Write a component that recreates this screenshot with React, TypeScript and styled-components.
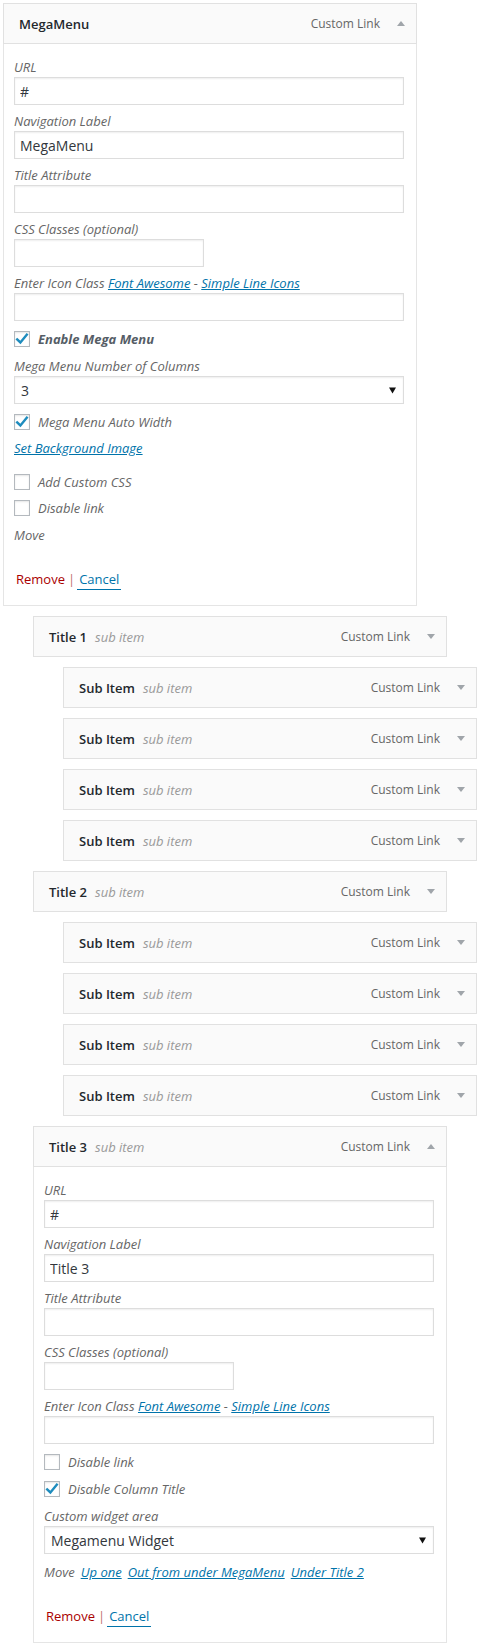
import React from "react";
import styled, { createGlobalStyle } from "styled-components";

const GlobalStyle = createGlobalStyle`
  html, body { margin: 0; padding: 0; background: #ffffff; }
  body {
    font-family: "Open Sans", "Noto Sans", sans-serif;
    font-size: 13px;
    color: #444444;
  }
  * { box-sizing: border-box; }
`;

const Page = styled.div`
  padding: 3px 0 0 3px;
  width: 481px;
  overflow: hidden;
`;

const MenuList = styled.ul`
  list-style: none;
  margin: 0;
  padding: 0;
`;

const Item = styled.li<{ $depth: number }>`
  margin: 0 0 10px ${(p) => p.$depth * 30}px;
  width: 414px;
`;

const Handle = styled.div`
  display: flex;
  align-items: center;
  justify-content: space-between;
  height: 41px;
  padding: 0 11px 0 15px;
  background: #fafafa;
  border: 1px solid #e1e1e1;
`;

const ItemTitle = styled.span`
  font-weight: 600;
  font-size: 13px;
  color: #23282d;
  white-space: nowrap;
`;

const SubTag = styled.span`
  font-weight: 400;
  font-style: italic;
  font-size: 13px;
  color: #999999;
  margin-left: 8px;
`;

const Controls = styled.span`
  display: flex;
  align-items: center;
  gap: 17px;
`;

const ItemType = styled.span`
  color: #666666;
  font-size: 12px;
`;

const Arrow = styled.svg`
  width: 8px;
  height: 5px;
  display: block;
  fill: #a0a5aa;
`;

const Panel = styled.div`
  display: flex;
  flex-direction: column;
  align-items: flex-start;
  padding: 14px 12px 16px 10px;
  background: #ffffff;
  border: 1px solid #e5e5e5;
  border-top: none;
`;

const Field = styled.div<{ $mt?: number }>`
  display: flex;
  flex-direction: column;
  margin-top: ${(p) => p.$mt ?? 0}px;
  width: 100%;
`;

const Label = styled.label`
  display: block;
  font-style: italic;
  font-size: 13px;
  line-height: 19px;
  color: #666666;
`;

const TextInput = styled.input<{ $width?: number }>`
  display: block;
  width: ${(p) => (p.$width ? `${p.$width}px` : "100%")};
  height: 28px;
  margin: 0;
  padding: 0 5px;
  border: 1px solid #dddddd;
  box-shadow: inset 0 1px 2px rgba(0, 0, 0, 0.07);
  background: #ffffff;
  font-family: "Open Sans", "Noto Sans", sans-serif;
  font-size: 14px;
  color: #32373c;
  outline: none;
  border-radius: 0;
`;

const SelectBox = styled.div`
  display: flex;
  align-items: center;
  justify-content: space-between;
  width: 100%;
  height: 28px;
  padding: 0 7px 0 6px;
  border: 1px solid #dddddd;
  box-shadow: inset 0 1px 2px rgba(0, 0, 0, 0.07);
  background: #ffffff;
  font-size: 14px;
  color: #32373c;
`;

const SelectArrow = styled.svg`
  width: 7px;
  height: 7px;
  display: block;
  fill: #111111;
`;

const CheckRow = styled.label<{ $mt: number }>`
  display: flex;
  align-items: center;
  gap: 8px;
  height: 16px;
  margin-top: ${(p) => p.$mt}px;
  font-style: italic;
  font-size: 13px;
  color: #666666;
`;

const CheckText = styled.span<{ $bold?: boolean }>`
  font-weight: ${(p) => (p.$bold ? 700 : 400)};
  color: ${(p) => (p.$bold ? "#555d66" : "#666666")};
  line-height: 16px;
`;

const Box = styled.span`
  display: flex;
  align-items: center;
  justify-content: center;
  width: 16px;
  height: 16px;
  flex: none;
  border: 1px solid #b4b9be;
  background: #ffffff;
  box-shadow: inset 0 1px 2px rgba(0, 0, 0, 0.1);
`;

const Link = styled.a`
  color: #0073aa;
  text-decoration: underline;
  font-style: italic;
  cursor: pointer;
`;

const BlockLink = styled(Link)<{ $mt: number }>`
  display: block;
  font-size: 13px;
  line-height: 19px;
  margin-top: ${(p) => p.$mt}px;
`;

const MoveRow = styled.div<{ $mt: number }>`
  display: flex;
  align-items: center;
  gap: 6px;
  line-height: 19px;
  margin-top: ${(p) => p.$mt}px;
  font-style: italic;
  font-size: 13px;
  color: #666666;
`;

const Actions = styled.div`
  display: block;
  line-height: 19px;
  margin-top: 25px;
  padding-left: 2px;
  white-space: nowrap;
`;

const RemoveLink = styled.a`
  color: #aa0000;
  text-decoration: none;
`;

const Sep = styled.span`
  color: #c07070;
  margin: 0 2px 0 3px;
`;

const CancelLink = styled.a`
  color: #0073aa;
  text-decoration: none;
  border-bottom: 1px solid #0073aa;
  padding: 1px 2px;
`;

const UpArrow = () => (
  <Arrow viewBox="0 0 8 5">
    <polygon points="0,5 4,0 8,5" />
  </Arrow>
);

const DownArrow = () => (
  <Arrow viewBox="0 0 8 5">
    <polygon points="0,0 8,0 4,5" />
  </Arrow>
);

const Checkbox = ({ checked }: { checked?: boolean }) => (
  <Box>
    {checked && (
      <svg width="14" height="14" viewBox="0 0 14 14">
        <path
          d="M2.2 7.4 L5.4 10.4 L11.8 2.6"
          fill="none"
          stroke="#1e8cbe"
          strokeWidth="2.4"
          strokeLinecap="square"
        />
      </svg>
    )}
  </Box>
);

const TextField = ({
  label,
  value,
  width,
  mt,
}: {
  label: React.ReactNode;
  value?: string;
  width?: number;
  mt?: number;
}) => (
  <Field $mt={mt}>
    <Label>{label}</Label>
    <TextInput readOnly value={value ?? ""} $width={width} />
  </Field>
);

const SelectField = ({ label, value, mt }: { label: string; value: string; mt: number }) => (
  <Field $mt={mt}>
    <Label>{label}</Label>
    <SelectBox>
      <span>{value}</span>
      <SelectArrow viewBox="0 0 7 7">
        <polygon points="0,0.5 7,0.5 3.5,6.5" />
      </SelectArrow>
    </SelectBox>
  </Field>
);

const IconLabel = () => (
  <>
    Enter Icon Class <Link>Font Awesome</Link> - <Link>Simple Line Icons</Link>
  </>
);

const CommonFields = ({ label }: { label: string }) => (
  <>
    <TextField label="URL" value="#" />
    <TextField label="Navigation Label" value={label} mt={7} />
    <TextField label="Title Attribute" mt={7} />
    <TextField label="CSS Classes (optional)" width={190} mt={7} />
    <TextField label={<IconLabel />} mt={7} />
  </>
);

const ActionLinks = () => (
  <Actions>
    <RemoveLink>Remove</RemoveLink>
    <Sep>|</Sep>
    <CancelLink>Cancel</CancelLink>
  </Actions>
);

const MegaPanel = () => (
  <Panel>
    <CommonFields label="MegaMenu" />
    <CheckRow $mt={10}>
      <Checkbox checked />
      <CheckText $bold>Enable Mega Menu</CheckText>
    </CheckRow>
    <SelectField label="Mega Menu Number of Columns" value="3" mt={10} />
    <CheckRow $mt={10}>
      <Checkbox checked />
      <CheckText>Mega Menu Auto Width</CheckText>
    </CheckRow>
    <BlockLink $mt={9}>Set Background Image</BlockLink>
    <CheckRow $mt={16}>
      <Checkbox />
      <CheckText>Add Custom CSS</CheckText>
    </CheckRow>
    <CheckRow $mt={10}>
      <Checkbox />
      <CheckText>Disable link</CheckText>
    </CheckRow>
    <MoveRow $mt={10}>Move</MoveRow>
    <ActionLinks />
  </Panel>
);

const ColumnPanel = () => (
  <Panel>
    <CommonFields label="Title 3" />
    <CheckRow $mt={10}>
      <Checkbox />
      <CheckText>Disable link</CheckText>
    </CheckRow>
    <CheckRow $mt={11}>
      <Checkbox checked />
      <CheckText>Disable Column Title</CheckText>
    </CheckRow>
    <SelectField label="Custom widget area" value="Megamenu Widget" mt={10} />
    <MoveRow $mt={9}>
      <span>Move</span>
      <Link>Up one</Link>
      <Link>Out from under MegaMenu</Link>
      <Link>Under Title 2</Link>
    </MoveRow>
    <ActionLinks />
  </Panel>
);

type MenuEntry = {
  depth: number;
  title: string;
  sub?: boolean;
  panel?: "mega" | "column";
};

const entries: MenuEntry[] = [
  { depth: 0, title: "MegaMenu", panel: "mega" },
  { depth: 1, title: "Title 1", sub: true },
  { depth: 2, title: "Sub Item", sub: true },
  { depth: 2, title: "Sub Item", sub: true },
  { depth: 2, title: "Sub Item", sub: true },
  { depth: 2, title: "Sub Item", sub: true },
  { depth: 1, title: "Title 2", sub: true },
  { depth: 2, title: "Sub Item", sub: true },
  { depth: 2, title: "Sub Item", sub: true },
  { depth: 2, title: "Sub Item", sub: true },
  { depth: 2, title: "Sub Item", sub: true },
  { depth: 1, title: "Title 3", sub: true, panel: "column" },
];

export default function App() {
  return (
    <Page>
      <GlobalStyle />
      <MenuList>
        {entries.map((e, i) => (
          <Item key={i} $depth={e.depth}>
            <Handle>
              <ItemTitle>
                {e.title}
                {e.sub && <SubTag>sub item</SubTag>}
              </ItemTitle>
              <Controls>
                <ItemType>Custom Link</ItemType>
                {e.panel ? <UpArrow /> : <DownArrow />}
              </Controls>
            </Handle>
            {e.panel === "mega" && <MegaPanel />}
            {e.panel === "column" && <ColumnPanel />}
          </Item>
        ))}
      </MenuList>
    </Page>
  );
}
